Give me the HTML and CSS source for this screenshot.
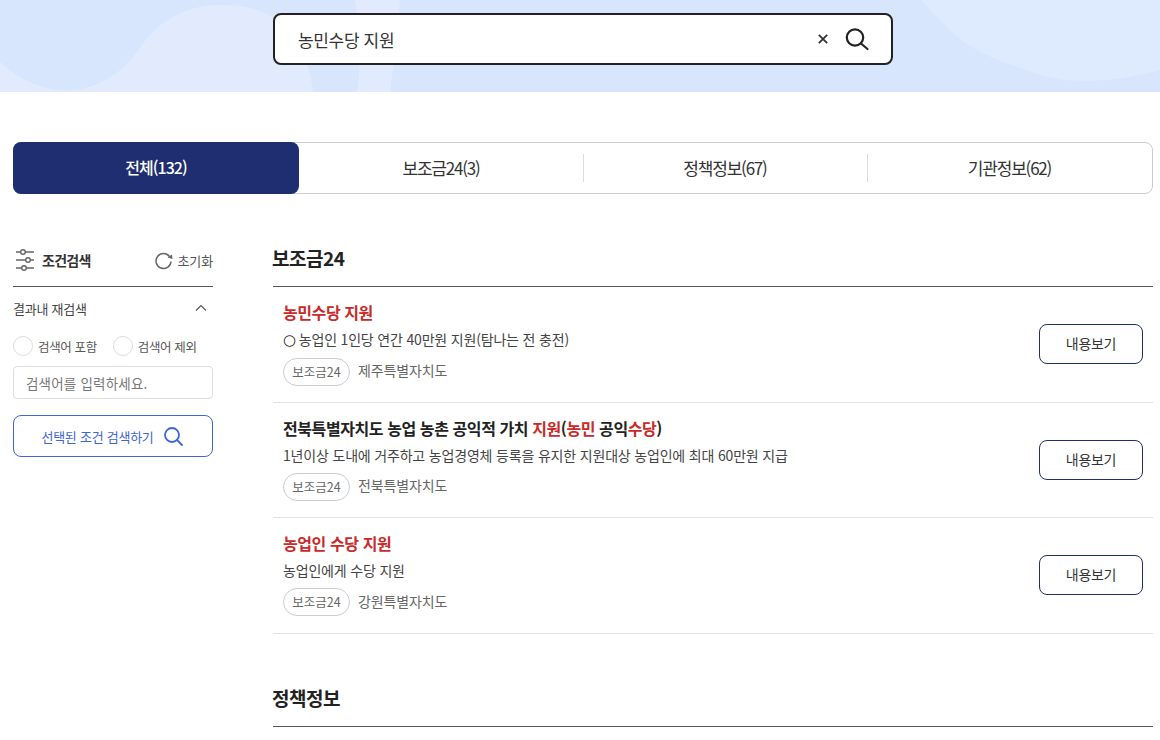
FILE: index.html
```
<!DOCTYPE html>
<html lang="ko">
<head>
<meta charset="utf-8">
<title>검색</title>
<link rel="stylesheet" href="styles.css">
</head>
<body>
<header class="hero">
  <svg class="hero-bg" width="1160" height="92" viewBox="0 0 1160 92" aria-hidden="true">
    <path class="blob" d="M0 62C20 80 42 90.500 66 90.500C96 90.500 122 74 140 48C158 20 188 5 220 5C245 5 262 9 280 22C300 40 310 65 313 92H0Z"/>
    <path class="blob" d="M355 0H400C398 30 394 60 390 92H357C362 60 360 30 355 0Z"/>
    <path class="blob-r" d="M922 0C950 36 980 56 1013 65C1040 76 1060 81 1083 81C1110 81 1135 77 1160 70V0Z"/>
  </svg>
  <form class="search">
    <span class="search-text">농민수당 지원</span>
    <svg class="search-clear" width="10" height="10" viewBox="0 0 10 10"><path d="M.8.8l8.400 8.400M9.200.8L.8 9.200"/></svg>
    <svg class="search-icon" width="24" height="24" viewBox="0 0 24 24"><circle cx="10" cy="10.500" r="8.200"/><path d="M16 16.500L22.500 22"/></svg>
  </form>
</header>

<nav class="tabs">
  <a class="tab active">전체(132)</a>
  <a class="tab">보조금24(3)</a>
  <a class="tab sep">정책정보(67)</a>
  <a class="tab sep">기관정보(62)</a>
</nav>

<div class="content">
  <aside class="side">
    <div class="side-head">
      <svg class="filter-icon" width="18" height="18" viewBox="0 0 18 18"><path d="M0 1h18M0 9h18M0 17h18"/><circle cx="7" cy="1" r="2.300"/><circle cx="12" cy="9" r="2.300"/><circle cx="8" cy="17" r="2.300"/></svg>
      <strong class="side-title">조건검색</strong>
      <span class="reset">
        <svg width="18" height="18" viewBox="0 0 18 18"><path d="M14.500 5.500A7.500 7.500 0 1 0 16 10.500"/><path class="reset-tip" d="M17.500 8l-5-1.500 4.500-3z"/></svg>
        초기화
      </span>
    </div>
    <div class="side-sub">
      <span>결과내 재검색</span>
      <svg width="12" height="8" viewBox="0 0 12 8"><path d="M1 6.500l5-5 5 5"/></svg>
    </div>
    <div class="radios">
      <label class="radio"><i></i>검색어 포함</label>
      <label class="radio"><i></i>검색어 제외</label>
    </div>
    <div class="side-input">검색어를 입력하세요.</div>
    <button class="side-btn">선택된 조건 검색하기
      <svg width="20" height="20" viewBox="0 0 20 20"><circle cx="9" cy="9" r="7"/><path d="M14 14l5 5"/></svg>
    </button>
  </aside>

  <main class="main">
    <section class="group">
      <h2 class="group-title"><span>보조금24</span></h2>
      <ul class="list">
        <li class="item">
          <div class="item-body">
            <h3 class="item-title"><em>농민수당 지원</em></h3>
            <p class="item-desc"><span class="bullet">○</span> 농업인 1인당 연간 40만원 지원(탐나는 전 충전)</p>
            <div class="item-meta"><span class="chip">보조금24</span><span class="org">제주특별자치도</span></div>
          </div>
          <a class="view">내용보기</a>
        </li>
        <li class="item">
          <div class="item-body">
            <h3 class="item-title">전북특별자치도 농업 농촌 공익적 가치 <em>지원</em>(<em>농민</em> 공익<em>수당</em>)</h3>
            <p class="item-desc">1년이상 도내에 거주하고 농업경영체 등록을 유지한 지원대상 농업인에 최대 60만원 지급</p>
            <div class="item-meta"><span class="chip">보조금24</span><span class="org">전북특별자치도</span></div>
          </div>
          <a class="view">내용보기</a>
        </li>
        <li class="item">
          <div class="item-body">
            <h3 class="item-title"><em>농업인 수당 지원</em></h3>
            <p class="item-desc">농업인에게 수당 지원</p>
            <div class="item-meta"><span class="chip">보조금24</span><span class="org">강원특별자치도</span></div>
          </div>
          <a class="view">내용보기</a>
        </li>
      </ul>
    </section>
    <section class="group second">
      <h2 class="group-title"><span>정책정보</span></h2>
      <div class="list"></div>
    </section>
  </main>
</div>
</body>
</html>
```

FILE: styles.css
```
* { box-sizing: border-box; }
html, body { height: 740px; overflow: hidden; }
body {
  margin: 0;
  background: #fff;
  color: #222;
  font-family: "Noto Sans CJK KR", "Noto Sans", sans-serif;
}
h2, h3, p, ul { margin: 0; padding: 0; list-style: none; }
em { font-style: normal; color: #c92a2a; }

.hero {
  position: relative;
  height: 92px;
  background: #d7e6fd;
  padding-top: 13px;
  overflow: hidden;
}
.hero-bg { position: absolute; left: 0; top: 0; }
.blob { fill: #e1ebfd; }
.blob-r { fill: #deeafd; }
.search {
  position: relative;
  display: flex;
  align-items: center;
  width: 620px;
  height: 52px;
  margin: 0 0 0 273px;
  padding: 0 22px 0 23px;
  background: #fff;
  border: 2px solid #222;
  border-radius: 8px;
}
.search-text { flex: 1; font-size: 17px; color: #333; letter-spacing: -0.02em; }
.search-clear { fill: none; stroke: #333; stroke-width: 1.800; margin-right: 17px; }
.search-icon { fill: none; stroke: #222; stroke-width: 2.200; stroke-linecap: round; }

.tabs {
  display: grid;
  grid-template-columns: 285px 284px 284px 285px;
  width: 1140px;
  height: 52px;
  margin: 50px 0 0 13px;
  border: 1px solid #ccc;
  border-radius: 8px;
}
.tab {
  position: relative;
  display: flex;
  align-items: center;
  justify-content: center;
  padding-bottom: 2px;
  font-size: 17px;
  letter-spacing: -1.200px;
  color: #333;
}
.tab.active {
  margin: -1px 0 -1px -1px;
  background: #1e2e70;
  color: #fff;
  border-radius: 8px;
  font-size: 16px;
  letter-spacing: -0.06em;
  font-weight: 500;
}
.tab.sep::before {
  content: "";
  position: absolute;
  left: 0;
  top: 11px;
  bottom: 11px;
  width: 1px;
  background: #ddd;
}

.content { display: flex; margin: 0 0 0 13px; }
.side { width: 200px; margin-top: 49px; flex: none; }
.side-head {
  display: flex;
  align-items: center;
  height: 44px;
  padding: 0 0 9px 3px;
  border-bottom: 1px solid #555;
}
.filter-icon { fill: none; stroke: #666; stroke-width: 1.600; margin-right: 8px; overflow: visible; }
.filter-icon circle { fill: #fff; stroke-width: 1.400; }
.side-title { flex: 1; font-weight: 700; font-size: 14px; letter-spacing: -0.05em; color: #333; }
.reset { display: flex; align-items: center; gap: 5px; color: #555; font-size: 13px; letter-spacing: -0.01em; }
.reset svg { fill: none; stroke: #666; stroke-width: 1.500; overflow: visible; }
.reset svg .reset-tip { fill: #666; stroke: none; }
.side-sub {
  display: flex;
  align-items: center;
  justify-content: space-between;
  height: 42px;
  font-size: 13px;
  color: #444;
  padding-right: 6px;
  letter-spacing: -0.02em;
}
.side-sub svg { fill: none; stroke: #555; stroke-width: 1.200; }
.radios { display: flex; gap: 16px; height: 20px; margin-top: 7px; }
.radio { display: flex; align-items: center; gap: 5px; font-size: 12.500px; letter-spacing: -0.03em; color: #555; }
.radio i { width: 20px; height: 20px; border: 1px solid #ddd; border-radius: 50%; }
.side-input {
  display: flex;
  align-items: center;
  height: 33px;
  margin-top: 10px;
  padding-left: 12px;
  border: 1px solid #ddd;
  border-radius: 4px;
  font-size: 13.500px;
  letter-spacing: .2px;
  color: #777;
}
.side-btn {
  display: flex;
  align-items: center;
  justify-content: center;
  gap: 9px;
  width: 200px;
  height: 42px;
  margin-top: 16px;
  padding-right: 8px;
  background: #fff;
  border: 1px solid #3e66d6;
  border-radius: 8px;
  color: #3e66d6;
  font: inherit;
  font-size: 13px;
  letter-spacing: -0.02em;
}
.side-btn svg { fill: none; stroke: #3e66d6; stroke-width: 1.800; stroke-linecap: round; }

.main { width: 880px; margin-left: 60px; }
.group { margin-top: 48px; }
.group-title {
  height: 45px;
  font-size: 19px;
  line-height: 32px;
  font-weight: 700;
  letter-spacing: -0.025em;
  color: #222;
  border-bottom: 1px solid #555;
}
.group-title span { margin-left: -1px; }
.item {
  display: flex;
  align-items: center;
  justify-content: space-between;
  height: 115.500px;
  padding: 0 10px;
  border-bottom: 1px solid #e2e2e2;
}
.item-body { padding-bottom: 3px; }
.item-title { font-size: 16px; font-weight: 700; line-height: 24px; letter-spacing: -0.026em; color: #222; }
.item-desc { font-size: 14px; line-height: 20px; margin-top: 5px; color: #444; letter-spacing: -0.18px; }
.bullet { display: inline-block; width: 12px; font-family: "DejaVu Sans", sans-serif; font-size: 15px; line-height: 20px; color: #222; letter-spacing: 0; }
.item-meta { display: flex; align-items: center; margin-top: 8px; gap: 8px; }
.chip {
  display: flex;
  align-items: center;
  justify-content: center;
  width: 67px;
  height: 28px;
  padding-bottom: 1px;
  border: 1px solid #ccc;
  border-radius: 14px;
  font-size: 12.500px;
  color: #666;
}
.org { padding-bottom: 3px; font-size: 14px; color: #666; letter-spacing: -0.01em; }
.view {
  display: flex;
  align-items: center;
  justify-content: center;
  width: 104px;
  height: 40px;
  padding-bottom: 2px;
  border: 1px solid #1e2e70;
  border-radius: 8px;
  font-size: 14px;
  color: #333;
  letter-spacing: -0.02em;
}
.second { margin-top: 48.500px; }
```
